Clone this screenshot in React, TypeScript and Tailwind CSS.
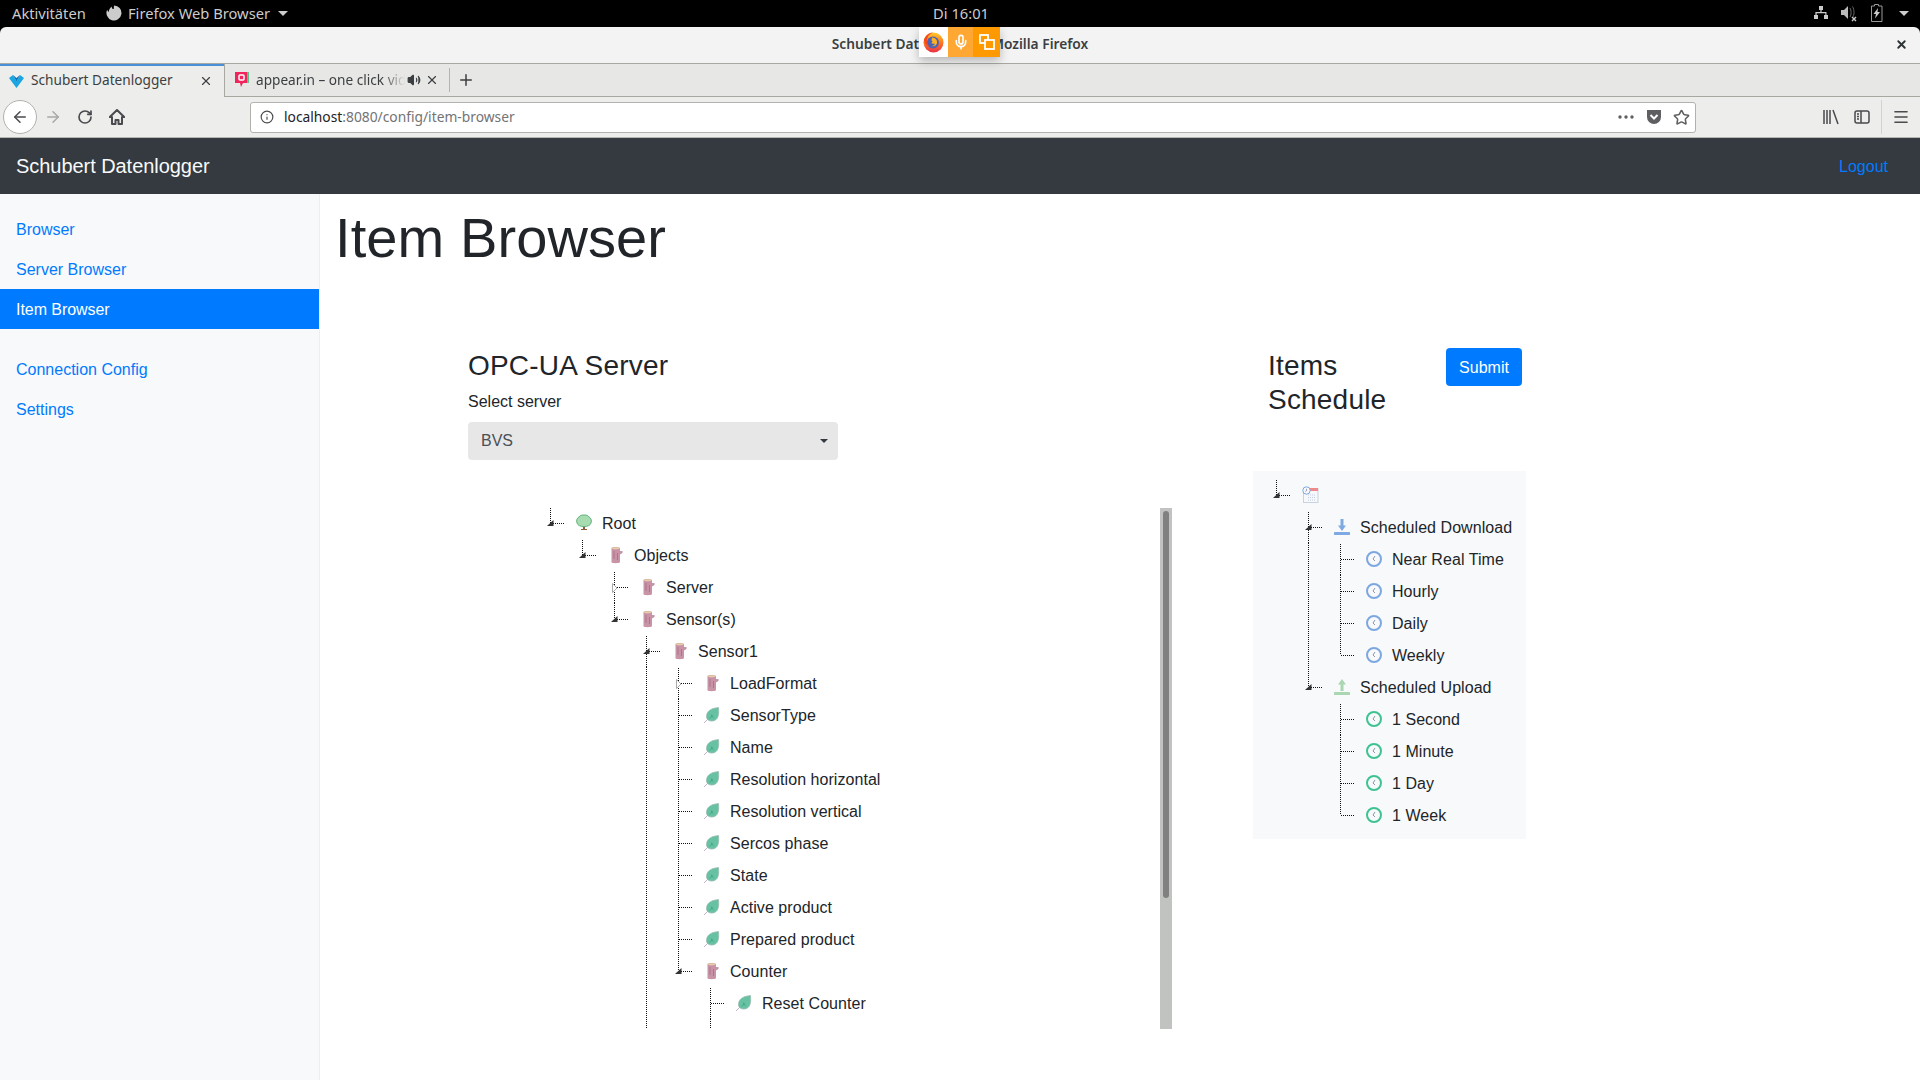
import { ArrowLeft, ArrowRight, Info, Menu, Mic, Plus, RotateCw, Star, Volume2, X } from "lucide-react";

type IconKind = "tree" | "log" | "leaf" | "calendar" | "down" | "up" | "clockBlue" | "clockGreen";

type TreeRow = {
  depth: number;
  guides?: number[];
  state?: "open" | "closed";
  end?: boolean;
  first?: boolean;
  icon?: IconKind;
  label?: string;
};

const serverRows: TreeRow[] = [
  { depth: 0, state: "open", end: true, first: true, icon: "tree", label: "Root" },
  { depth: 1, state: "open", end: true, first: true, icon: "log", label: "Objects" },
  { depth: 2, state: "closed", first: true, icon: "log", label: "Server" },
  { depth: 2, state: "open", end: true, icon: "log", label: "Sensor(s)" },
  { depth: 3, state: "open", first: true, icon: "log", label: "Sensor1" },
  { depth: 4, guides: [3], state: "closed", first: true, icon: "log", label: "LoadFormat" },
  { depth: 4, guides: [3], icon: "leaf", label: "SensorType" },
  { depth: 4, guides: [3], icon: "leaf", label: "Name" },
  { depth: 4, guides: [3], icon: "leaf", label: "Resolution horizontal" },
  { depth: 4, guides: [3], icon: "leaf", label: "Resolution vertical" },
  { depth: 4, guides: [3], icon: "leaf", label: "Sercos phase" },
  { depth: 4, guides: [3], icon: "leaf", label: "State" },
  { depth: 4, guides: [3], icon: "leaf", label: "Active product" },
  { depth: 4, guides: [3], icon: "leaf", label: "Prepared product" },
  { depth: 4, guides: [3], state: "open", end: true, icon: "log", label: "Counter" },
  { depth: 5, guides: [3], first: true, icon: "leaf", label: "Reset Counter" },
  { depth: 5, guides: [3] },
];

const scheduleRows: TreeRow[] = [
  { depth: 0, state: "open", end: true, first: true, icon: "calendar" },
  { depth: 1, state: "open", first: true, icon: "down", label: "Scheduled Download" },
  { depth: 2, guides: [1], first: true, icon: "clockBlue", label: "Near Real Time" },
  { depth: 2, guides: [1], icon: "clockBlue", label: "Hourly" },
  { depth: 2, guides: [1], icon: "clockBlue", label: "Daily" },
  { depth: 2, guides: [1], end: true, icon: "clockBlue", label: "Weekly" },
  { depth: 1, state: "open", end: true, icon: "up", label: "Scheduled Upload" },
  { depth: 2, first: true, icon: "clockGreen", label: "1 Second" },
  { depth: 2, icon: "clockGreen", label: "1 Minute" },
  { depth: 2, icon: "clockGreen", label: "1 Day" },
  { depth: 2, end: true, icon: "clockGreen", label: "1 Week" },
];

const NodeIcon = ({ kind }: { kind: IconKind }) => {
  if (kind === "tree") {
    return (
      <svg width="18" height="18" viewBox="0 0 18 18" className="shrink-0">
        <rect x="7" y="11" width="2" height="5" fill="#8d5a3c" />
        <rect x="5" y="15" width="6" height="1" fill="#8d5a3c" />
        <path d="M8 1c3 0 4 .5 5 2 2 1 3 3.500 2 6-1 2.500-3 3.500-7 3.500S2 11.500 1 9C0 6.500 1 4 3 3c1-1.500 2-2 5-2z" fill="#a6dcb0" stroke="#62b37c" strokeWidth="1" />
      </svg>
    );
  }
  if (kind === "log") {
    return (
      <svg width="18" height="18" viewBox="0 0 18 18" className="shrink-0">
        <path d="M12 5h2.500v2L12 8.500z" fill="#c693a5" />
        <path d="M3.500 2.500C3.500 1.500 5 1 7.500 1s4.500.5 4.500 1.500V16c0 .8-2 1.200-4.300 1.200S3.500 16.800 3.500 16z" fill="#c893a6" />
        <ellipse cx="7.700" cy="2.200" rx="3.600" ry="1" fill="#e8cfa8" />
        <path d="M6 5v8M9.500 7v7" stroke="#ad7489" strokeWidth="1" />
      </svg>
    );
  }
  if (kind === "leaf") {
    return (
      <svg width="18" height="18" viewBox="0 0 18 18" className="shrink-0">
        <path d="M0 17l4-4" stroke="#c8b6cf" strokeWidth="1" />
        <path d="M14.500 1.500c.5 5.500.2 8.500-1.500 11-2 2.700-6 3.300-8.500 1.800C1.500 12.500 2 8 4.500 5.200 7 2.700 10.500 2 14.500 1.500z" fill="#66c2a3" stroke="#9fb7b0" strokeWidth=".7" />
        <path d="M5.500 12.500L9 9M7.500 10V8.500M7.500 11h2" stroke="#3f9c80" strokeWidth=".7" />
      </svg>
    );
  }
  if (kind === "calendar") {
    return (
      <svg width="18" height="18" viewBox="0 0 18 18" className="shrink-0">
        <rect x="1.500" y="2.500" width="14.500" height="14" fill="#f7f8fb" stroke="#c8d3de" />
        <rect x="5" y="2" width="11" height="3" fill="#f08a8a" />
        <path d="M6 9h8M6 11.500h8M6 14h8" stroke="#c2cfe0" strokeDasharray="1 1" />
        <circle cx="4.500" cy="4.500" r="3.700" fill="#f7f8fb" stroke="#7da7e0" />
        <path d="M4.500 2.800v1.900L3.300 5.500" fill="none" stroke="#6b7f9e" strokeWidth=".7" />
      </svg>
    );
  }
  if (kind === "down" || kind === "up") {
    const color = kind === "down" ? "#7fa9e2" : "#aad6b2";
    return (
      <svg width="18" height="18" viewBox="0 0 18 18" className="shrink-0">
        <rect x="0" y="14" width="16" height="3" rx=".5" fill={color} />
        {kind === "down" ? (
          <path d="M6.500 1h3v6.500H12L8 13 4 7.500h2.500z" fill={color} />
        ) : (
          <path d="M6.500 13V6.500H4L8 1l4 5.500H9.500V13z" fill={color} />
        )}
      </svg>
    );
  }
  const ring = kind === "clockBlue" ? "#7da7e0" : "#3fc292";
  return (
    <svg width="18" height="18" viewBox="0 0 18 18" className="shrink-0">
      <circle cx="8" cy="9" r="7" fill="#f8f9fa" stroke={ring} strokeWidth="2" />
      <path d="M9 6L7 9l2 2" fill="none" stroke="#7c8aa0" strokeWidth=".9" />
    </svg>
  );
};

const Guide = ({ on }: { on: boolean }) => (
  <svg width="32" height="32" className="shrink-0" shapeRendering="crispEdges">
    {on && <line x1="6.500" y1="0" x2="6.500" y2="32" stroke="#111" strokeDasharray="1 1" />}
  </svg>
);

const Connector = ({ row }: { row: TreeRow }) => (
  <svg width="32" height="32" className="shrink-0">
    <g shapeRendering="crispEdges">
      <line x1="6.500" y1={row.first ? 1 : 0} x2="6.500" y2={row.end ? 16 : 32} stroke="#111" strokeDasharray="1 1" />
      <line x1="7" y1="16.500" x2="21" y2="16.500" stroke="#111" strokeDasharray="1 1" />
    </g>
    {row.state === "open" && <path d="M3 19L9.500 19 9.500 13z" fill="#333" />}
    {row.state === "closed" && <path d="M4.500 12.500L9 17 4.500 21.500z" fill="#fff" stroke="#aaa" />}
  </svg>
);

const TreeLine = ({ row }: { row: TreeRow }) => (
  <div className="flex h-8 items-center">
    {Array.from({ length: row.depth }).map((_, i) => (
      <Guide key={i} on={!!row.guides && row.guides.includes(i)} />
    ))}
    {row.icon && (
      <>
        <Connector row={row} />
        <span className="flex w-[26px] shrink-0">
          <NodeIcon kind={row.icon} />
        </span>
      </>
    )}
    {!row.icon && <Guide on />}
    {row.label && (
      <span className="whitespace-nowrap pt-[2px] text-base leading-[30px] tracking-[0.05px] text-[#212529]">{row.label}</span>
    )}
  </div>
);

const FirefoxLogo = () => (
  <svg width="21" height="21" viewBox="0 0 21 21">
    <defs>
      <linearGradient id="ffOuter" x1="0" y1="0" x2="0" y2="1">
        <stop offset="0" stopColor="#ffcb2e" />
        <stop offset=".5" stopColor="#ff7a1f" />
        <stop offset="1" stopColor="#e8304a" />
      </linearGradient>
    </defs>
    <circle cx="10.500" cy="10.500" r="10" fill="url(#ffOuter)" />
    <circle cx="10" cy="10.500" r="6" fill="#4a62b8" />
    <path d="M9 5.500c3.500.3 5.500 2.500 5 5.500-.5 2.500-3.200 4-5.500 3 2 0 3.500-1 3.300-2.500-1 .5-2.800.2-3.500-.8 1.700-.2 1.300-1.700.2-2.200z" fill="#ffb21f" />
    <path d="M1 8c1-4 4-7 9-7.500C6 2 4 5 4 9c0 2 1 4 2.500 5.500C3 13.500 1 11 1 8z" fill="#f6491e" />
  </svg>
);

const TopBar = () => (
  <div className="flex h-[27px] shrink-0 items-center bg-black pb-px font-['Noto_Sans',sans-serif] text-[14.7px] text-[#cccccc]">
    <span className="ml-3 w-[94px] whitespace-nowrap">Aktivitäten</span>
    <svg width="16" height="16" viewBox="0 0 16 16">
      <path d="M8 .5a7.500 7.500 0 1 1-6.800 4.300C1.500 6 2 6.500 2.800 7c0-2 1-4 3-5.500-.2 1 .2 2 1 2.500.8-.2 2-.2 3 .5C11.500 5.500 12 7 11.500 8.500 11 10 9.500 11 8 10.800c1-.5 1.500-1.300 1.300-2-.6.300-1.500.3-2.300-.3.700-.3 1-1 .5-1.500" fill="#cccccc" />
    </svg>
    <span className="ml-[6px] w-[144px] whitespace-nowrap">Firefox Web Browser</span>
    <span className="ml-[6px] h-0 w-0 border-x-[5px] border-t-[5px] border-x-transparent border-t-[#cccccc]" />
    <span className="ml-[645px] w-[56px] whitespace-nowrap text-center">Di 16:01</span>
    <div className="ml-auto flex items-center">
      <svg width="16" height="16" viewBox="0 0 16 16">
        <path d="M6 1h4v4H8.600v2H13.500v3H15v4h-4v-4h1.300V8.300H3.700V10H5v4H1v-4h1.400V7H7.400V5H6z" fill="#cccccc" />
      </svg>
      <svg width="18" height="18" viewBox="0 0 18 18" className="ml-[11px]">
        <path d="M1 6h3l4-4v13l-4-4H1z" fill="#bbbbbb" />
        <path d="M10 4c1.500 2 1.500 7 0 9M12.500 2.500c2 3 2 9 0 11" fill="none" stroke="#666" />
        <path d="M12 13l4 4m0-4l-4 4" stroke="#cccccc" strokeWidth="1.400" />
      </svg>
      <svg width="14" height="18" viewBox="0 0 14 18" className="ml-[12px]">
        <path d="M4.500 0.500h4v1.500h3.500v15.500H1.500V2h3z" fill="none" stroke="#999" strokeWidth="1" />
        <path d="M8 4L3.500 10h2.500L5 14.500 10 8H7.500z" fill="#cccccc" />
      </svg>
      <span className="ml-[15px] mr-[11px] h-0 w-0 border-x-[5px] border-t-[5px] border-x-transparent border-t-[#cccccc]" />
    </div>
  </div>
);

const TitleBar = () => (
  <div className="relative flex h-[37px] shrink-0 items-center justify-center border-b border-[#a8a8a2] bg-black">
    <div className="flex h-full w-full items-center justify-center rounded-t-[6px] bg-[#f3f3f3] pb-px font-['Noto_Sans',sans-serif] text-[13.75px] font-semibold text-[#3a3f41]">
      Schubert Datenlogger - Mozilla Firefox
      <X className="absolute right-[12px] top-[11px]" size={13} strokeWidth={3.500} color="#2e3436" />
    </div>
    <div className="absolute left-[919px] top-0 flex h-[30px] w-[81px] shadow-[0_4px_10px_rgba(0,0,0,0.25)]">
      <div className="flex w-[29px] items-center justify-center bg-white">
        <FirefoxLogo />
      </div>
      <div className="flex w-[25px] items-center justify-center bg-[#ffa733]">
        <Mic size={16} color="#ffffff" strokeWidth={2.500} />
      </div>
      <div className="flex w-[27px] items-center justify-center bg-[#ff9900]">
        <svg width="16" height="16" viewBox="0 0 16 16" fill="none" stroke="#ffffff" strokeWidth="1.800">
          <rect x="1" y="1" width="8" height="8" />
          <rect x="6" y="6" width="9" height="9" fill="#ff9900" />
        </svg>
      </div>
    </div>
  </div>
);

const TabStrip = () => (
  <div className="flex h-[33px] shrink-0 bg-[#e7e7e5] font-['Noto_Sans',sans-serif] text-[13.65px] text-[#3c3f41]">
    <div className="flex w-[224px] items-center border-t-[2px] border-[#4a90d9] bg-[#ededeb] pb-[2px] pl-[9px]">
      <svg width="15" height="14" viewBox="0 0 15 14">
        <path d="M0 4l4-3 3.500 6.500L11 1l4 3-7.500 10z" fill="#1aa6e0" />
        <path d="M4 1l3.500 6.500L11 1l-3.500 3z" fill="#0f6fb5" />
      </svg>
      <span className="ml-[7px] w-[168px] whitespace-nowrap">Schubert Datenlogger</span>
      <X size={14} color="#3c3f41" />
    </div>
    <div className="flex w-[225px] items-center border-b border-l border-[#a8a8a2]">
      <svg width="15" height="16" viewBox="0 0 15 16" className="ml-[10px]">
        <path d="M0 0h14v11H8l-2 4-1-4H0z" fill="#f0255c" />
        <path d="M12 0h2v11h-2z" fill="#5cc48b" />
        <rect x="4" y="3" width="5" height="5" rx="1" fill="none" stroke="#ffffff" strokeWidth="1.500" />
      </svg>
      <span className="ml-[6px] w-[149px] overflow-hidden whitespace-nowrap [mask-image:linear-gradient(to_right,black_85%,transparent)]">
        appear.in – one click video conversations
      </span>
      <Volume2 size={14} color="#3c3f41" fill="#3c3f41" className="ml-[2px]" />
      <X size={14} color="#3c3f41" className="ml-[4px]" />
    </div>
    <div className="flex flex-1 items-center border-b border-[#a8a8a2]">
      <span className="h-6 w-px bg-[#b4b4b0]" />
      <Plus size={18} color="#3c3f41" strokeWidth={2} className="ml-[7px]" />
    </div>
  </div>
);

const Toolbar = () => (
  <div className="flex h-[41px] shrink-0 items-center border-b border-[#b5b5b1] bg-[#ededeb] text-[#4a4a4f]">
    <div className="ml-[3px] flex h-[34px] w-[34px] items-center justify-center rounded-full border border-[#b1b1ae] bg-white">
      <ArrowLeft size={18} strokeWidth={2} color="#4a4a4f" />
    </div>
    <ArrowRight size={18} strokeWidth={2} color="#a8a8a8" className="ml-[7px]" />
    <RotateCw size={16} strokeWidth={2.500} className="ml-[15px]" />
    <svg width="16" height="16" viewBox="0 0 16 16" className="ml-[16px]">
      <path d="M8 1L0.800 8H3v7h3.500v-4h3v4H13V8h2.200z" fill="none" stroke="#4a4a4f" strokeWidth="2" strokeLinejoin="round" />
    </svg>
    <div className="ml-[125px] flex h-[31px] w-[1446px] items-center rounded-[3px] border border-[#b1b1ae] bg-white font-['Noto_Sans',sans-serif] text-[13.8px]">
      <Info size={14} color="#4a4a4f" className="ml-[9px]" />
      <span className="ml-[10px] whitespace-nowrap text-[#222222]">
        localhost<span className="text-[#737373]">:8080/config/item-browser</span>
      </span>
      <div className="ml-auto mr-[5px] flex items-center">
        <svg width="16" height="4" viewBox="0 0 16 4" fill="#5f5f62">
          <circle cx="2" cy="2" r="1.700" />
          <circle cx="8" cy="2" r="1.700" />
          <circle cx="14" cy="2" r="1.700" />
        </svg>
        <svg width="16" height="16" viewBox="0 0 16 16" className="ml-[12px]">
          <path d="M1 1h14v7a7 7 0 0 1-14 0z" fill="#5f5f62" />
          <path d="M4.500 6L8 9.500 11.500 6" fill="none" stroke="#ffffff" strokeWidth="2" />
        </svg>
        <Star size={17} strokeWidth={2.200} color="#5f5f62" className="ml-[11px]" />
      </div>
    </div>
    <svg width="16" height="16" viewBox="0 0 16 16" className="ml-[127px]" stroke="#4a4a4f" strokeWidth="1.500">
      <path d="M1 1v14M4 1v14M7 1v14M10 1l5 14" fill="none" />
    </svg>
    <svg width="16" height="16" viewBox="0 0 16 16" className="ml-[15px]" fill="none" stroke="#4a4a4f" strokeWidth="1.500">
      <rect x="1" y="2" width="14" height="12" rx="2" />
      <path d="M7 2v12M3 5h2M3 7.500h2M3 10h2" />
    </svg>
    <span className="ml-[11px] h-[34px] w-px bg-[#d2d2d0]" />
    <Menu size={18} strokeWidth={2.200} color="#4a4a4f" className="ml-[10px]" />
  </div>
);

const Sidebar = () => {
  const linkClass = "flex h-10 items-center px-4 pt-[2px] text-base";
  return (
    <aside className="w-[320px] shrink-0 border-r border-[#eceef0] bg-[#f8f9fa] pt-[15px] text-[#007bff]">
      <div className={linkClass}>Browser</div>
      <div className={linkClass}>Server Browser</div>
      <div className={`${linkClass} bg-[#007bff] tracking-[-0.05px] text-white`}>Item Browser</div>
      <div className="h-5" />
      <div className={linkClass}>Connection Config</div>
      <div className={linkClass}>Settings</div>
    </aside>
  );
};

const App = () => {
  return (
    <div className="flex h-[1080px] w-[1920px] flex-col overflow-hidden bg-white font-['Liberation_Sans',Arial,sans-serif]">
      <TopBar />
      <TitleBar />
      <TabStrip />
      <Toolbar />
      <header className="flex h-14 shrink-0 items-center justify-between bg-[#343a40] pl-4 pr-8">
        <span className="text-xl tracking-[-0.05px] text-[#f8f9fa]">Schubert Datenlogger</span>
        <span className="pt-[2px] text-base text-[#007bff]">Logout</span>
      </header>
      <div className="flex min-h-0 flex-1">
        <Sidebar />
        <main className="flex-1 pl-[15px] pt-[10px] text-[#212529]">
          <h1 className="text-[56px] leading-[67px] tracking-[0.1px]">Item Browser</h1>
          <div className="ml-[133px] mt-[77px] flex">
            <section className="w-[704px]">
              <h2 className="pt-px text-[28px] leading-[34px] tracking-[0.2px]">OPC-UA Server</h2>
              <div className="mt-[7px] text-base leading-6">Select server</div>
              <div className="mt-2 flex h-[38px] w-[370px] items-center justify-between rounded bg-[#e7e7e7] pl-[13px] pr-[10px] text-base text-[#495057]">
                BVS
                <span className="h-0 w-0 border-x-[4px] border-t-[4px] border-x-transparent border-t-[#343a40]" />
              </div>
              <div className="mt-[47px] flex h-[522px]">
                <div className="flex-1 overflow-hidden pl-[76px]">
                  {serverRows.map((row, i) => (
                    <TreeLine key={i} row={row} />
                  ))}
                </div>
                <div className="mt-px w-3 bg-[#c1c3c1] pt-[3px]">
                  <div className="mx-[3px] h-[387px] rounded-[3px] bg-[#808080]" />
                </div>
              </div>
            </section>
            <section className="ml-[81px] w-[273px]">
              <div className="flex items-start justify-between pl-[15px] pr-1">
                <h2 className="w-[160px] pt-px text-[28px] leading-[34px] tracking-[0.2px]">Items Schedule</h2>
                <button className="h-[38px] w-[76px] rounded bg-[#007bff] pt-px text-base text-white">Submit</button>
              </div>
              <div className="mt-[54px] bg-[#f8f9fa] py-2 pl-[17px]">
                {scheduleRows.map((row, i) => (
                  <TreeLine key={i} row={row} />
                ))}
              </div>
            </section>
          </div>
        </main>
      </div>
    </div>
  );
};

export default App;
